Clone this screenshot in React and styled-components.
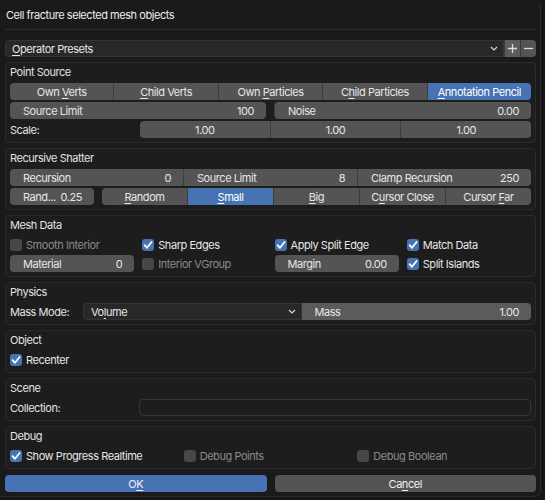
import styled, { createGlobalStyle } from "styled-components";

const GlobalStyle = createGlobalStyle`
  *, *::before, *::after {
    box-sizing: border-box;
  }
  html, body {
    margin: 0;
    background: #161616;
  }
  body {
    font-family: Inter, "Noto Sans", sans-serif;
    font-size: 11px;
    letter-spacing: -0.45px;
    color: #e6e6e6;
    -webkit-font-smoothing: antialiased;
  }
`;

const Dialog = styled.div`
  width: 541px;
  background: #1a1a1a;
  border: 1px solid #2c2c2c;
  border-left: none;
  border-top: none;
  border-radius: 0 6px 6px 0;
  padding: 0 4px 4px 5px;
  display: flex;
  flex-direction: column;
`;

const Title = styled.div`
  height: 30px;
  display: flex;
  align-items: center;
  padding-left: 1px;
  border-bottom: 1px solid #2e2e2e;
  color: #ececec;
`;

const PresetRow = styled.div`
  display: flex;
  height: 17px;
  margin: 10px 0 5px;
`;

const Dropdown = styled.div`
  flex: 1;
  display: flex;
  align-items: center;
  justify-content: space-between;
  padding: 0 5px 0 ${({ $pad }) => $pad || 7}px;
  background: #282828;
  border: 1px solid #363636;
  border-radius: ${({ $radius }) => $radius || "4px 0 0 4px"};
`;

const IconButton = styled.div`
  width: 16px;
  display: flex;
  align-items: center;
  justify-content: center;
  background: ${({ $light }) => ($light ? "#5c5c5c" : "#545454")};
  border-left: 1px solid #3a3a3a;
  border-radius: ${({ $last }) => ($last ? "0 4px 4px 0" : "0")};
`;

const Stack = styled.div`
  display: flex;
  flex-direction: column;
  gap: 5px;
`;

const Panel = styled.div`
  background: #1d1d1d;
  border: 1px solid #2b2b2b;
  border-radius: 4px;
  padding: 0 4px 4px;
  display: flex;
  flex-direction: column;
  gap: 2px;
`;

const PanelHeader = styled.div`
  height: 18px;
  display: flex;
  align-items: center;
  color: #e2e2e2;
`;

const Row = styled.div`
  display: flex;
  height: 17px;
  gap: ${({ $gap }) => $gap || 0}px;
`;

const Label = styled.div`
  width: ${({ $w }) => $w}px;
  flex: none;
  display: flex;
  align-items: center;
  color: #e2e2e2;
`;

const Group = styled.div`
  flex: ${({ $w }) => ($w ? `0 0 ${$w}px` : 1)};
  display: flex;
  border-radius: 4px;
  overflow: hidden;
`;

const ToolButton = styled.div`
  flex: 1;
  display: flex;
  align-items: center;
  justify-content: center;
  background: ${({ $active }) => ($active ? "#4772b3" : "#545454")};
  color: ${({ $active }) => ($active ? "#ffffff" : "#e6e6e6")};
  & + & {
    border-left: 1px solid #3c3c3c;
  }
`;

const Field = styled.div`
  flex: ${({ $w }) => ($w ? `0 0 ${$w}px` : 1)};
  display: flex;
  align-items: center;
  justify-content: ${({ $center }) => ($center ? "center" : "space-between")};
  padding: ${({ $center }) => ($center ? "0" : "0 12px 0 13px")};
  background: ${({ $light }) => ($light ? "#5b5b5b" : "#545454")};
  border-radius: ${({ $radius }) => $radius || "4px"};
  & + & {
    border-left: 1px solid #3c3c3c;
  }
`;

const TextInput = styled.div`
  flex: 1;
  background: #1d1d1d;
  border: 1px solid #363636;
  border-radius: 4px;
`;

const Grid = styled.div`
  display: grid;
  grid-template-columns: repeat(${({ $cols }) => $cols}, 1fr);
  column-gap: ${({ $gap }) => $gap || 0}px;
  row-gap: 2px;
  grid-auto-rows: 17px;
`;

const CheckItem = styled.div`
  display: flex;
  align-items: center;
  gap: 4px;
  height: 17px;
  color: ${({ $dim }) => ($dim ? "#8a8a8a" : "#e6e6e6")};
`;

const Box = styled.div`
  width: 12px;
  height: 12px;
  flex: none;
  border-radius: 3px;
  display: flex;
  align-items: center;
  justify-content: center;
  background: ${({ $on }) => ($on ? "#4772b3" : "#474747")};
`;

const Footer = styled.div`
  display: flex;
  gap: 8px;
  height: 17px;
  margin-top: 6px;
`;

const FooterButton = styled.div`
  flex: 1;
  display: flex;
  align-items: center;
  justify-content: center;
  border-radius: 4px;
  background: ${({ $primary }) => ($primary ? "#4772b3" : "#545454")};
  color: #f0f0f0;
`;

const Key = styled.u`
  text-decoration-thickness: 1px;
  text-underline-offset: 2px;
`;

const Chevron = () => (
  <svg width="8" height="5" viewBox="0 0 8 5">
    <polyline points="1,1 4,4 7,1" fill="none" stroke="#d8d8d8" strokeWidth="1.2" />
  </svg>
);

const Check = () => (
  <svg width="10" height="10" viewBox="0 0 10 10">
    <polyline points="1.6,5.2 4,7.8 8.6,2" fill="none" stroke="#fff" strokeWidth="1.8" strokeLinecap="round" strokeLinejoin="round" />
  </svg>
);

const Checkbox = ({ on, dim, children }) => (
  <CheckItem $dim={dim}>
    <Box $on={on}>{on && <Check />}</Box>
    {children}
  </CheckItem>
);

const Slider = ({ label, value, w, light, radius }) => (
  <Field $w={w} $light={light} $radius={radius}>
    <span>{label}</span>
    <span>{value}</span>
  </Field>
);

// text with one underlined accelerator letter, Blender style
const K = ({ pre = "", k, post = "" }) => (
  <span>
    {pre}
    <Key>{k}</Key>
    {post}
  </span>
);

export default function App() {
  return (
    <>
      <GlobalStyle />
      <Dialog>
        <Title>Cell fracture selected mesh objects</Title>

        <PresetRow>
          <Dropdown $pad={6}>
            <K k="O" post="perator Presets" />
            <Chevron />
          </Dropdown>
          <IconButton $light>
            <svg width="11" height="11" viewBox="0 0 11 11">
              <path d="M5.5 1v9M1 5.5h9" stroke="#dedede" strokeWidth="1.3" />
            </svg>
          </IconButton>
          <IconButton $last>
            <svg width="11" height="11" viewBox="0 0 11 11">
              <path d="M1 5.5h9" stroke="#dedede" strokeWidth="1.3" />
            </svg>
          </IconButton>
        </PresetRow>

        <Stack>
          <Panel>
            <PanelHeader>Point Source</PanelHeader>
            <Row>
              <Group>
                <ToolButton><K pre="Own " k="V" post="erts" /></ToolButton>
                <ToolButton><K k="C" post="hild Verts" /></ToolButton>
                <ToolButton><K pre="Own " k="P" post="articles" /></ToolButton>
                <ToolButton><K pre="C" k="h" post="ild Particles" /></ToolButton>
                <ToolButton $active><K k="A" post="nnotation Pencil" /></ToolButton>
              </Group>
            </Row>
            <Row $gap={8}>
              <Slider label="Source Limit" value="100" />
              <Slider label="Noise" value="0.00" />
            </Row>
            <Row>
              <Label $w={130}>Scale:</Label>
              <Group>
                <Field $center $radius="0">1.00</Field>
                <Field $center $radius="0">1.00</Field>
                <Field $center $radius="0">1.00</Field>
              </Group>
            </Row>
          </Panel>

          <Panel>
            <PanelHeader>Recursive Shatter</PanelHeader>
            <Row>
              <Group>
                <Slider label="Recursion" value="0" radius="0" />
                <Slider label="Source Limit" value="8" radius="0" />
                <Slider label="Clamp Recursion" value="250" radius="0" />
              </Group>
            </Row>
            <Row $gap={8}>
              <Slider label="Rand..." value="0.25" w={84} />
              <Group>
                <ToolButton><K k="R" post="andom" /></ToolButton>
                <ToolButton $active><K k="S" post="mall" /></ToolButton>
                <ToolButton><K k="B" post="ig" /></ToolButton>
                <ToolButton><K pre="C" k="u" post="rsor Close" /></ToolButton>
                <ToolButton><K pre="Cursor " k="F" post="ar" /></ToolButton>
              </Group>
            </Row>
          </Panel>

          <Panel>
            <PanelHeader>Mesh Data</PanelHeader>
            <Grid $cols={4} $gap={8}>
              <Checkbox dim>Smooth Interior</Checkbox>
              <Checkbox on>Sharp Edges</Checkbox>
              <Checkbox on>Apply Split Edge</Checkbox>
              <Checkbox on>Match Data</Checkbox>
              <Slider label="Material" value="0" />
              <Checkbox dim>Interior VGroup</Checkbox>
              <Slider label="Margin" value="0.00" />
              <Checkbox on>Split Islands</Checkbox>
            </Grid>
          </Panel>

          <Panel>
            <PanelHeader>Physics</PanelHeader>
            <Row>
              <Label $w={73}>Mass Mode:</Label>
              <Dropdown $radius="4px 0 0 4px">
                <K pre="Vo" k="l" post="ume" />
                <Chevron />
              </Dropdown>
              <Slider label="Mass" value="1.00" light radius="0 4px 4px 0" />
            </Row>
          </Panel>

          <Panel>
            <PanelHeader>Object</PanelHeader>
            <Checkbox on>Recenter</Checkbox>
          </Panel>

          <Panel>
            <PanelHeader>Scene</PanelHeader>
            <Row>
              <Label $w={129}>Collection:</Label>
              <TextInput />
            </Row>
          </Panel>

          <Panel>
            <PanelHeader>Debug</PanelHeader>
            <Grid $cols={3}>
              <Checkbox on>Show Progress Realtime</Checkbox>
              <Checkbox dim>Debug Points</Checkbox>
              <Checkbox dim>Debug Boolean</Checkbox>
            </Grid>
          </Panel>
        </Stack>

        <Footer>
          <FooterButton $primary><K pre="O" k="K" /></FooterButton>
          <FooterButton><K pre="Ca" k="n" post="cel" /></FooterButton>
        </Footer>
      </Dialog>
    </>
  );
}
